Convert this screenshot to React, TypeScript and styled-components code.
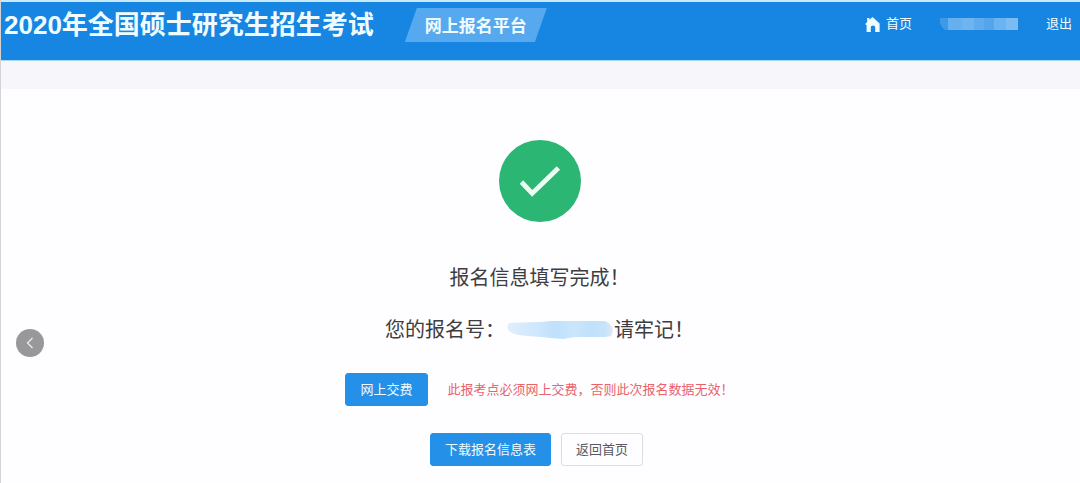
import React from "react";
import styled, { createGlobalStyle, css } from "styled-components";

const GlobalStyle = createGlobalStyle`
  * { box-sizing: border-box; }
  body {
    margin: 0;
    background: #fefdff;
    color: #3d3d42;
    font-family: "Liberation Sans", "Noto Sans CJK SC", sans-serif;
    font-size: 13px;
    line-height: 20px;
  }
`;

const Page = styled.div`
  min-height: 100vh;
  border-left: 1px solid #d3d3d8;
`;

const Header = styled.header`
  display: flex;
  align-items: flex-start;
  justify-content: space-between;
  height: 61px;
  padding: 6px 8px 0 3px;
  background: #1786e2;
  border-top: 2px solid #c9eaf8;
  border-bottom: 1px solid #a9d8fa;
  color: #effcff;
`;

const Brand = styled.div`
  display: flex;
  gap: 31px;
`;

const SiteTitle = styled.h1`
  margin: 0;
  font-size: 26px;
  font-weight: 700;
  line-height: 34px;
  white-space: nowrap;
`;

const Badge = styled.span`
  height: 34px;
  padding: 0 20px;
  background: #56a9ee;
  clip-path: polygon(12px 0, 100% 0, calc(100% - 12px) 100%, 0 100%);
  font-size: 17px;
  font-weight: 700;
  line-height: 38px;
  white-space: nowrap;
`;

const Nav = styled.nav`
  display: flex;
  align-items: center;
  gap: 28px;
  height: 32px;
`;

const NavLink = styled.a`
  display: flex;
  align-items: center;
  gap: 5px;
  color: inherit;
  text-decoration: none;
  white-space: nowrap;
`;

const SubBar = styled.div`
  height: 28px;
  background: #f7f6fa;
`;

const Main = styled.main`
  display: flex;
  flex-direction: column;
  align-items: center;
  padding: 51px 2px 16px 0;
`;

const Message = styled.p`
  display: flex;
  align-items: center;
  margin: 0;
  font-size: 20px;
  line-height: 32px;
  white-space: nowrap;

  svg + & { margin-top: 40px; }
  & + & { margin-top: 20px; }
`;

const Actions = styled.div`
  display: flex;
  align-items: center;
  gap: 20px;
  margin-top: 27px;
`;

const FooterActions = styled(Actions)`
  gap: 10px;
  padding-right: 6px;
`;

const Button = styled.button<{ $primary?: boolean }>`
  height: 33px;
  padding: 0 14px;
  border: 1px solid #dcdce2;
  border-radius: 3px;
  background: #fefdff;
  color: #58585f;
  font: inherit;
  white-space: nowrap;
  cursor: pointer;

  ${(p) =>
    p.$primary &&
    css`
      border-color: #2590e8;
      background: #2590e8;
      color: #effcff;
    `}
`;

const Warning = styled.span`
  color: #e8646c;
  white-space: nowrap;
`;

const BackButton = styled.button`
  position: fixed;
  top: 329px;
  left: 16px;
  display: flex;
  align-items: center;
  justify-content: center;
  width: 28px;
  height: 28px;
  padding: 0;
  border: 0;
  border-radius: 50%;
  background: #98979a;
  cursor: pointer;
`;

const HomeIcon = () => (
  <svg width="16" height="16" viewBox="0 0 16 16" fill="currentColor" aria-hidden="true">
    <path d="M7.6 1 14.6 7.6V16H10.2V11.2Q10.2 9.6 8 9.6T5.8 11.2V16H1.6V9H.6V7.4L2.2 6V2H4.4V3.8z" />
  </svg>
);

const SuccessIcon = () => (
  <svg width="82" height="82" viewBox="0 0 82 82" role="img" aria-label="成功">
    <circle cx="41" cy="41" r="41" fill="#2bb673" />
    <path d="M22.4 42 33.2 53.4 59.4 28" fill="none" stroke="#e9fff3" strokeWidth="4.8" />
  </svg>
);

const AccountMask = () => (
  <svg width="78" height="12" viewBox="0 0 78 12" aria-hidden="true">
    <path d="M0 0H8V12H5Q1 9 0 5z" fill="#3c9ae8" />
    <path d="M8 0H22V12H8z" fill="#67b0ef" />
    <path d="M22 0H34V12H22z" fill="#6fb3f0" />
    <path d="M34 0H44V12H34z" fill="#60abee" />
    <path d="M44 0H54V12H44z" fill="#55a5ed" />
    <path d="M54 0H66V12H54z" fill="#6cb3f1" />
    <path d="M66 0H78V12H66z" fill="#7dbcf3" />
  </svg>
);

const NumberMask = () => (
  <svg width="109" height="20" viewBox="0 0 109 20" aria-hidden="true">
    <defs>
      <linearGradient id="number-mask">
        <stop offset="0" stopColor="#e0effc" />
        <stop offset="0.3" stopColor="#cde7fc" />
        <stop offset="0.45" stopColor="#bfe0fb" />
        <stop offset="0.62" stopColor="#c9e6fc" />
        <stop offset="0.8" stopColor="#c0e1fb" />
        <stop offset="0.93" stopColor="#c8e3fa" />
        <stop offset="1" stopColor="#e0e9f5" />
      </linearGradient>
    </defs>
    <path
      d="M4 3 34 2 46 1H100Q105 3 107 7Q109 12 106 16L100 17H70L58 19 46 18 36 17 22 16Q8 15 4 11Q1 7 4 3z"
      fill="url(#number-mask)"
    />
  </svg>
);

export default function App() {
  return (
    <Page>
      <GlobalStyle />
      <Header>
        <Brand>
          <SiteTitle>2020年全国硕士研究生招生考试</SiteTitle>
          <Badge>网上报名平台</Badge>
        </Brand>
        <Nav>
          <NavLink href="#home">
            <HomeIcon />
            首页
          </NavLink>
          <AccountMask />
          <NavLink href="#logout">退出</NavLink>
        </Nav>
      </Header>
      <SubBar />
      <Main>
        <SuccessIcon />
        <Message>报名信息填写完成！</Message>
        <Message>
          您的报名号：
          <NumberMask />
          请牢记！
        </Message>
        <Actions>
          <Button $primary type="button">网上交费</Button>
          <Warning>此报考点必须网上交费，否则此次报名数据无效！</Warning>
        </Actions>
        <FooterActions>
          <Button $primary type="button">下载报名信息表</Button>
          <Button type="button">返回首页</Button>
        </FooterActions>
      </Main>
      <BackButton type="button" aria-label="返回">
        <svg width="10" height="14" viewBox="0 0 10 14" fill="none" stroke="#ececee" strokeWidth="1.3" aria-hidden="true">
          <path d="M7.5 2 2.5 7l5 5" />
        </svg>
      </BackButton>
    </Page>
  );
}
